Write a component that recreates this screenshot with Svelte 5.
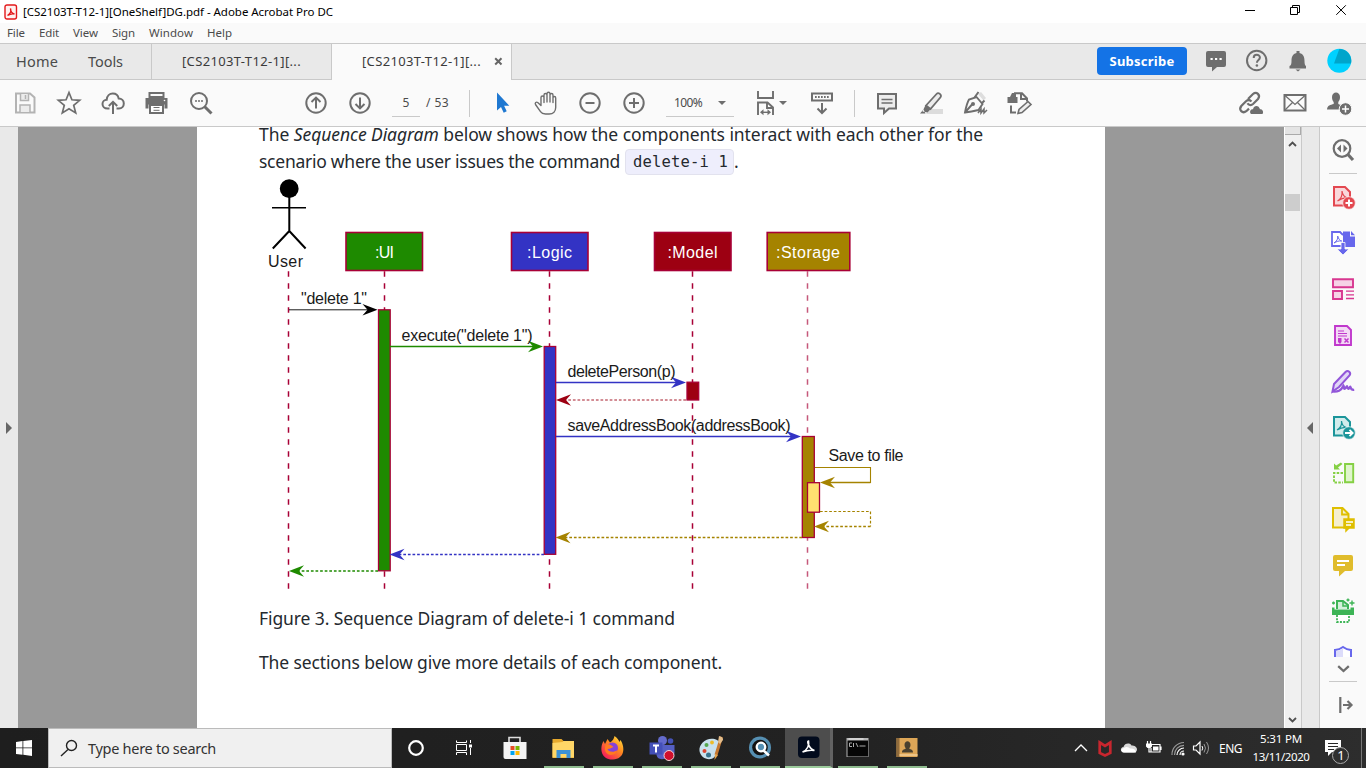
<script>
  // Spreads a line of text over a given width with letter spacing.
  function track(node, width) {
    const range = document.createRange();
    range.selectNodeContents(node);
    const natural = range.getBoundingClientRect().width;
    node.style.letterSpacing = (width - natural) / node.textContent.length + 'px';
  }

  const S = 'fill="none" stroke="currentColor" stroke-width="2"';
  const icons = {
    save: `<path d="M5 4.500h14l4.500 4v15h-18.500z" fill="none" stroke="#b3b3b3" stroke-width="2"/><path d="M9.500 5v6.500h8V5M9 23v-7h10v7" fill="#ececec" stroke="#b3b3b3" stroke-width="1.500"/><path d="M14.500 6v4" stroke="#b3b3b3" stroke-width="1.500"/>`,
    star: `<path d="M14 3.500l2.900 7.300 7.800.5-6 5 2 7.600-6.700-4.200-6.700 4.200 2-7.600-6-5 7.800-.5z" fill="none" stroke="currentColor" stroke-width="1.700"/>`,
    cloud: `<path d="M10.500 19.500H8.500c-3 0-5-2-5-4.500s2-4.300 4.200-4.300C8 7 10.500 4.600 13.800 4.600c3 0 5.300 2 5.900 5 3 0 5.100 2 5.100 4.800 0 2.900-2 5.100-4.800 5.100h-2.500" ${S}/><path d="M14 25V13M9.800 17L14 12.800l4.200 4.200" ${S}/>`,
    print: `<path d="M6.500 4h14v4h-14z" fill="none" stroke="currentColor" stroke-width="2"/><path d="M2.500 9h22v10.500h-3v-4h-16v4h-3z" fill="currentColor"/><path d="M7 16h13v8H7z" fill="#fff" stroke="currentColor" stroke-width="2"/><path d="M10.500 18.500h6M10.500 21.300h6" stroke="currentColor"/><circle cx="21.500" cy="11.500" r=".8" fill="#fff"/>`,
    find: `<circle cx="12" cy="12" r="8" ${S}/><path d="M17.500 17.500l7 7" stroke="currentColor" stroke-width="3"/><path d="M8 12h2M11 12h2M14 12h2" stroke="currentColor" stroke-width="1.700"/>`,
    up: `<circle cx="14" cy="14" r="9.700" ${S}/><path d="M14 19.500V9M9.500 13L14 8.600l4.500 4.400" ${S}/>`,
    down: `<circle cx="14" cy="14" r="9.700" ${S}/><path d="M14 8.500V19M9.500 15l4.500 4.400 4.500-4.400" ${S}/>`,
    cursor: `<path d="M9 3.500v18l4-3.500 2.700 5.800 3-1.500-2.600-5.600h5.200z" fill="#1f78d1"/>`,
    hand: `<path d="M9 16.500l-3.300-3c-1.400-1-3.100.4-2.200 2l5 7.200C9.800 24.700 11 25 13.500 25h3.700c4 0 6.500-2.700 6.500-6.500V9c0-2-2.700-2-2.700 0v4.500V6c0-2-3-2-3 0v7V4.800c0-2-3-2-3 0V13 6c0-2-3-2-3 0v7.500V8.500c0-2-3-2-3 0z" fill="none" stroke="currentColor" stroke-width="1.400" stroke-linejoin="round"/>`,
    minus: `<circle cx="14" cy="14" r="9.700" ${S}/><path d="M9.500 14h9" ${S}/>`,
    plus: `<circle cx="14" cy="14" r="9.700" ${S}/><path d="M9 14h10M14 9v10" ${S}/>`,
    fit: `<path d="M7 2v7h15V2M7 26V13.500h9.500l5.500 5V26M16 13.500v5.500h6" fill="none" stroke="currentColor" stroke-width="1.900"/><path d="M10.500 23.300h8" stroke="currentColor" stroke-width="1.400"/><path d="M12.500 20.300v6l-3.500-3zM16.500 20.300v6l3.500-3z" fill="currentColor"/>`,
    keys: `<path d="M4 4.500h20v7H4z" ${S}/><path d="M7 8h14" stroke="currentColor" stroke-width="1.800" stroke-dasharray="1.700 1.300"/><path d="M14 14v9.500M9.500 19.500l4.500 4.500 4.500-4.500" ${S}/>`,
    note: `<path d="M5 5h18v14.500h-7l-5 4.500v-4.500H5z" fill="#ececec" stroke="currentColor" stroke-width="2"/><path d="M8.500 10.500h11M8.500 14h11" stroke="currentColor" stroke-width="1.300"/>`,
    marker: `<path d="M13 20h13v5H9z" fill="#dcdcdc"/><path d="M9 16.500L19.500 5c2-2.200 5.600.8 4 3.300L13.500 20z" fill="#ececec" stroke="currentColor" stroke-width="1.800"/><path d="M8.500 16l5 4.300-3 3.300-5-1zM6.500 20.500L3 24.500h5.500z" fill="currentColor"/>`,
    nib: `<path d="M17 5l5.500 6.500 2.500-2.500-5-6z" fill="#ddd"/><path d="M4 23.500C5 18 6 14 8 10.500l7.500-2.500 6 7L17.500 21c-4 1-9 2-13.500 2.500zM4 23.500l7-8" fill="none" stroke="currentColor" stroke-width="1.900"/><path d="M13.500 8.500l4-5.500M20.500 14.500l3-3" stroke="currentColor" stroke-width="2"/><circle cx="12" cy="15" r="2" fill="currentColor"/><path d="M17 24l3-4v4l3-4v4l3-3" fill="none" stroke="currentColor" stroke-width="1.500"/>`,
    edit: `<path d="M9 4.200h8l5 5.300v3M16 4.500v5.500h6M6 16.500v7h5" ${S}/><path d="M2.500 8h10v6h-10z" fill="currentColor"/><path d="M5 8l2-4h4v4" fill="currentColor"/><path d="M13 24.500l1-4 9-8 3 3-9 8z" fill="#eee" stroke="currentColor" stroke-width="1.600"/>`,
    link: `<g fill="none" stroke="currentColor" stroke-width="2.200"><path d="M11 10l5-5c3.500-3 8 1 5 5l-5 5c-2 1.800-4.500 1-5.500-.7"/><path d="M14.500 12.500c-2-2-4-1.700-5.500-.3l-4.700 4.800c-3 4 1.200 8 5 5.200l2.700-2.600"/></g><path d="M14 25c-2-2-.5-5 2-4.700 1-4.600 6-4.200 7 0 2.500-.3 4 2.700 2.500 4.700z" fill="currentColor"/>`,
    mail: `<path d="M3.500 6h21v15.500h-21z" ${S}/><path d="M4 6.500l10 9 10-9M4 21l7.500-7.500M24 21l-7.500-7.500" fill="none" stroke="currentColor" stroke-width="1.300"/>`,
    person: `<path d="M7 8c0-6 8-6 8 0 0 2.500-.8 3.800-1.700 5v2c3 1.500 5.200 2 5.700 5.500H2c.4-4.500 3.500-4.500 6.700-5.500v-2C7.800 12 7 10.500 7 8z" fill="currentColor"/><circle cx="20.500" cy="20" r="6.300" fill="currentColor" stroke="#fafafa"/><path d="M17 20h7M20.500 16.500v7" stroke="#fff" stroke-width="1.500"/>`,
    chat: `<path d="M6 4h16q2 0 2 2v12q0 2-2 2h-7l-5 4.500V20H6q-2 0-2-2V6q0-2 2-2z" fill="currentColor"/><path d="M8.500 12h2.200M13 12h2.200M17.500 12h2.200" stroke="#fff" stroke-width="2"/>`,
    help: `<circle cx="13.700" cy="13.500" r="9.700" ${S}/><path d="M10.700 11c0-4.200 6.200-4 6.200-.5 0 2.500-3 2.400-3 5.200" ${S}/><circle cx="13.900" cy="18.500" r="1.300" fill="currentColor"/>`,
    bell: `<path d="M12.500 4h3v2c4 1 5 4 5 8 0 3 .5 4.500 1.500 5v2.500H5.500V19C7 18.500 7.500 17 7.500 14c0-4 1-7 5-8zM11.500 22.500h5l-2.500 2z" fill="currentColor"/>`,
    avatar: `<circle cx="14.300" cy="13.700" r="12" fill="#00d1ff"/><path d="M14.300 1.900A12 12 0 0 1 26 16.500H9z" fill="#00a5cb"/>`
  };

  const side = [
    `<path d="M5 4h11l5 5v13.500H5z" fill="#f9d7da" stroke="#e34850" stroke-width="2"/><path d="M8.500 18c3.500-2 5-6 4.500-10 .5 4 2 6 5.500 7-3-.5-6 .5-10 3z" fill="none" stroke="#e34850" stroke-width="1.200"/><circle cx="20" cy="20" r="6.300" fill="#e34850" stroke="#fafafa" stroke-width=".7"/><path d="M16.500 20h7M20 16.500v7" stroke="#fff" stroke-width="2"/>`,
    `<path d="M12 17H3V3h8l3 3" fill="#fff" stroke="#6767ec" stroke-width="1.800"/><path d="M14 2.500h7v5h5V18H14zM22 2l4 4.200h-4z" fill="#6767ec"/><path d="M5 14c3-2 4-4 3.700-7 .8 3 2 4.500 4 5-3-.4-5 .5-7.700 2z" fill="none" stroke="#6767ec"/><path d="M12 13.500h4V20h4l-6 6-6-6h4z" fill="#6767ec" stroke="#fafafa" stroke-width=".8"/>`,
    `<path d="M4 4.200h20v8H4zM4 16h9v8H4z" fill="#f6d2e6" stroke="#d83790" stroke-width="1.900"/><path d="M17 16.200h8M17 19.800h8M17 23.500h8" stroke="#d83790" stroke-width="1.300"/>`,
    `<path d="M6 5h12l4 4v15H6z" fill="#f3d9f5" stroke="#c038cc" stroke-width="1.900"/><path d="M9 10h6M9 12.500h9M9 15h9" stroke="#c038cc" stroke-width="1.200"/><path d="M9 17h3.500v4L11 23l-2-2z" fill="#c038cc"/><path d="M15.500 17.500l4 4M19.500 17.500l-4 4" stroke="#c038cc" stroke-width="1.500"/>`,
    `<path d="M5 17L16.500 5c2.500-2.500 6 .5 4 3.500L10 20l-6.500 4.500z" fill="#e1d6f7" stroke="#9256d9" stroke-width="2"/><path d="M3 24.500c6 .5 9-.500 11.500-6 1 1 0 3.500 1 3.500s2-3 2.500-3 .2 3 1.200 3 1.500-2.500 2-2.500 0 3.800 4 3.300" fill="none" stroke="#9256d9" stroke-width="2.200"/>`,
    `<path d="M5 4h11l5 5v13.500H5z" fill="#d2ecec" stroke="#1b959a" stroke-width="2"/><path d="M8 17c3.500-2 5-5 4.500-9 .5 4 2 6 5 6.500-3-.5-6 .5-9.500 2.500z" fill="none" stroke="#1b959a" stroke-width="1.200"/><circle cx="20" cy="20" r="6.300" fill="#1b959a" stroke="#fafafa" stroke-width=".7"/><path d="M16 20h7M20.500 16.800l3.200 3.200-3.200 3.200" fill="none" stroke="#fff" stroke-width="1.800"/>`,
    `<path d="M16 5h8.200v18.300H16z" fill="#dff5cc" stroke="#85d044" stroke-width="1.900"/><path d="M14 14H5v9.500h9" fill="none" stroke="#85d044" stroke-width="1.900" stroke-dasharray="2.500 1.300"/><path d="M5 4.500v6h6l-2-2L13.500 5l-1.600-1.500-4.700 3z" fill="#85d044"/>`,
    `<path d="M4 3h9.500l6 6v13.500H4z" fill="#f5efcd" stroke="#dfbf00" stroke-width="2"/><path d="M13 3v6.500h7" fill="none" stroke="#dfbf00" stroke-width="1.800"/><path d="M15 14h10v9h-5l-3 3v-3h-2z" fill="#dfbf00" stroke="#dfbf00" stroke-width="1.500"/><path d="M17 17h7M17 20h5" stroke="#fff" stroke-width="1.300"/>`,
    `<path d="M6 4h16q2 0 2 2v12q0 2-2 2h-6l-6 5.500V20H6q-2 0-2-2V6q0-2 2-2z" fill="#e0bc2c"/><path d="M8 10h12M8 14h8" stroke="#fff" stroke-width="1.800"/>`,
    `<path d="M8 12V4h6l5 4v4" fill="#d4f0db" stroke="#3db456" stroke-width="2"/><path d="M14 4v5h6" fill="none" stroke="#3db456" stroke-width="1.500"/><path d="M3 10.500h2.500v2h16v-2H25v7.500H3z" fill="#3db456"/><path d="M8 18v7h12v-7" fill="#fff" stroke="#3db456" stroke-width="1.800" stroke-dasharray="2 1.300"/><path d="M4.500 4.500v3M3 6h3M23 3.500v5M20.500 6h5M19 1.500v3M17.500 3h3" stroke="#3db456" stroke-width="1.400"/>`,
    `<path d="M6 14V7c3.200-.3 5.600-1.200 8-3 2.400 1.800 4.800 2.700 8 3v10" fill="#fff" stroke="#6767ec" stroke-width="2"/><path d="M7 8c2.800-.3 5-1.200 7-2.800V18H7z" fill="#dcdcfa"/>`
  ];

  const apps = [
    { cls: 'store', run: false, art: `<path d="M8.500 9V3.500h11V9" fill="none" stroke="#ddd" stroke-width="1.600"/><path d="M3 8h23v17H5q-2 0-2-2z" fill="#f4f4f4"/><path d="M10 12h4v4h-4z" fill="#e74c25"/><path d="M15 12h4v4h-4z" fill="#7bb700"/><path d="M10 17h4v4h-4z" fill="#00a3ee"/><path d="M15 17h4v4h-4z" fill="#ffb900"/>` },
    { cls: 'explorer', run: true, art: `<path d="M3 5h9l2 2h10.500v17H3z" fill="#e7a92d"/><path d="M3 9l10-1 1-1h10.500v16.500H3z" fill="#ffd667"/><path d="M7 24v-8h14v8h-4v-4h-6v4z" fill="#3b91d6"/>` },
    { cls: 'firefox', run: true, art: `<defs><linearGradient id="fx" x1="1" y1="0" x2=".2" y2="1"><stop offset="0" stop-color="#fff044"/><stop offset=".45" stop-color="#ff8c1f"/><stop offset="1" stop-color="#f5155f"/></linearGradient></defs><path d="M16 2c3 2 4 4 5 6l1-2c5 8 4 19-7.500 19.500C3 26 .5 15 5 7l1.500 3L9 5l2.500 3.500C14 7 15.500 5 16 2z" fill="url(#fx)"/><circle cx="14" cy="14" r="5.500" fill="#8541d8"/><path d="M7 11c3-2 6 0 8 2-2 .5-3 2-6 2 1 3 6 4 10 1-1 5-8 6.500-11 3-2-2-2-5-1-8z" fill="#ff7a21"/>` },
    { cls: 'teams', run: true, art: `<circle cx="15" cy="6.500" r="4.500" fill="#646bcc"/><circle cx="23" cy="7" r="2.800" fill="#4552b5"/><path d="M9 11h11v11c-3 5-11 4-11-2zM20 11h7v8c-1 4-5 4-7 2z" fill="#555fc3"/><path d="M2 8.500h13v12H2z" fill="#4450b8"/><path d="M5.500 11.500h6M8.500 11.500v7" stroke="#fff" stroke-width="2"/><circle cx="21.500" cy="21.500" r="5" fill="#d0102c" stroke="#f4d5da"/>` },
    { cls: 'paint', run: true, art: `<path d="M3 17C2 10 10 3 18 5c6 1 7 8 3 10-3 1 0 4-3 8-5 5-14 1-15-6z" fill="#c9e1ed"/><circle cx="8" cy="17" r="2" fill="#de4530"/><circle cx="10" cy="11" r="2" fill="#54a84f"/><circle cx="15.500" cy="8.500" r="1.900" fill="#edbb29"/><circle cx="12" cy="21" r="2.500" fill="#38738d"/><path d="M25 3l-5.500 18" stroke="#c67831" stroke-width="3"/><path d="M21.500 8l1-6c2 .500 4 1 4 4l-3 4z" fill="#e3bd8b"/><path d="M18 26l.500-6 3 1z" fill="#e5a34a"/>` },
    { cls: 'search', run: true, art: `<circle cx="14.500" cy="13.500" r="11" fill="#5690b3"/><circle cx="14.500" cy="13.500" r="7.800" fill="#111"/><circle cx="15.500" cy="13" r="4.300" fill="#5690b3" stroke="#fff" stroke-width="2.300"/><path d="M18 16.500l5.500 5" stroke="#fff" stroke-width="2.500"/>` },
    { cls: 'acrobat', run: true, art: `<rect x="4.500" y="2.500" width="21.500" height="21.500" rx="4" fill="#020b1d"/><path d="M9 18c5-2 7-7 6-11-2 0 .5 8 6 9.500-4-.8-8 0-12 1.500z" fill="none" stroke="#fff" stroke-width="1.600"/>` },
    { cls: 'console', run: true, art: `<path d="M3 4h22v19H3z" fill="#b4b4b4"/><path d="M4 6.500h20.500v16H4z" fill="#060606"/><path d="M5 5h15" stroke="#eee"/><path d="M8.500 9H6v3.500h2.500M10 9v4M12.500 9l2 4M16 12h6" fill="none" stroke="#aaa"/>` },
    { cls: 'contacts', run: true, art: `<path d="M4 4h21v19H4z" fill="#dda657"/><path d="M4 4h3v19H4z" fill="#8f6b3c"/><path d="M7 20h18v2H7z" fill="#edc486"/><path d="M12 11c0-5 6-5 6 0 0 2-1 3-1.500 3.500 2 1 4 1 4 4h-11c0-3 2-3 4-4-.5-.5-1.500-1.500-1.500-3.500z" fill="#49402f"/>` }
  ];

  const lifelines = [288.5, 384.5, 549.5, 692.5];
  const boxes = [
    { x: 346, w: 76.500, fill: '#1e8a00', name: ':UI', tx: 375, tw: 19 },
    { x: 511.500, w: 76.500, fill: '#3333c4', name: ':Logic', tx: 527, tw: 45 },
    { x: 654.500, w: 76.500, fill: '#9d0012', name: ':Model', tx: 667.500, tw: 50 },
    { x: 767.200, w: 82.600, fill: '#a58300', name: ':Storage', tx: 776, tw: 64 }
  ];
  const bars = [
    { x: 378.500, y: 309.800, w: 11.700, h: 261, fill: '#1e8a00' },
    { x: 544.200, y: 346.500, w: 11.500, h: 207.800, fill: '#3333c4' },
    { x: 687, y: 382.200, w: 11.700, h: 17.800, fill: '#9d0012' },
    { x: 802.300, y: 436.500, w: 12, h: 101, fill: '#a58300' },
    { x: 807.500, y: 482.700, w: 12, h: 29.500, fill: '#ffe070' }
  ];
  const arrows = [
    { from: 289, to: 377.500, y: 309.800, color: '#000', thin: true },
    { from: 390, to: 543, y: 346.500, color: '#1e8a00' },
    { from: 556, to: 686, y: 382.500, color: '#3333c4' },
    { from: 686, to: 556, y: 400, color: '#9d0012', dash: true, thin: true },
    { from: 556, to: 801, y: 436.500, color: '#3333c4' },
    { from: 870.500, to: 820, y: 482.500, color: '#a58300' },
    { from: 870.500, to: 814, y: 526.500, color: '#a58300', dash: true },
    { from: 802, to: 555.500, y: 537.500, color: '#a58300', dash: true },
    { from: 544, to: 389.500, y: 554.500, color: '#3333c4', dash: true },
    { from: 378, to: 289, y: 571, color: '#1e8a00', dash: true }
  ];
  const labels = [
    { x: 268, y: 267.400, w: 35, t: 'User' },
    { x: 301, y: 304.400, w: 66, t: '"delete 1"' },
    { x: 401.500, y: 341, w: 131, t: 'execute("delete 1")' },
    { x: 567.500, y: 377, w: 108, t: 'deletePerson(p)' },
    { x: 567.500, y: 431, w: 223, t: 'saveAddressBook(addressBook)' },
    { x: 828.500, y: 461, w: 75, t: 'Save to file' }
  ];
  const head = (a) => {
    const d = a.to > a.from ? -1 : 1;
    return `${a.to},${a.y} ${a.to + 15 * d},${a.y - 5.800} ${a.to + 10 * d},${a.y} ${a.to + 15 * d},${a.y + 5.800}`;
  };
  const menu = [['File', 18], ['Edit', 20], ['View', 25], ['Sign', 23], ['Window', 44], ['Help', 25]];
</script>

{#snippet icon(name)}
  <span class="ic"><svg width="28" height="28" viewBox="0 0 28 28">{@html icons[name]}</svg></span>
{/snippet}

<div class="window">
  <header class="title">
    <svg width="14" height="16" viewBox="0 0 14 16"><rect x="1" y="1" width="11.500" height="14" rx="2" fill="#fff1f0" stroke="#e3191b" stroke-width="1.400"/><path d="M3.500 11.500C6 10 7.500 7 6.500 4.500c0 3 2 5 4 5.500-2-.4-4.500 0-7 1.500z" fill="none" stroke="#e3191b" stroke-width="1.400"/></svg>
    <span class="name" use:track={310}>[CS2103T-T12-1][OneShelf]DG.pdf - Adobe Acrobat Pro DC</span>
    <svg class="winctl" width="110" height="20" viewBox="1244 0 110 20" fill="none" stroke="#000"><path d="M1245 10.500h10M1290.500 7.500h7v7h-7zM1292.500 7.500v-2h7v7h-2M1336.300 5.300l9.500 9.500M1345.800 5.300l-9.500 9.500"/></svg>
  </header>
  <nav class="menu">
    {#each menu as [m, w]}<span class="mi" use:track={w}>{m}</span>{/each}
  </nav>

  <div class="tabs">
    <div class="home"><span use:track={42}>Home</span><span use:track={35}>Tools</span></div>
    <div class="tab"><span use:track={119}>[CS2103T-T12-1][...</span></div>
    <div class="tab on"><span use:track={119}>[CS2103T-T12-1][...</span><svg width="9" height="9" viewBox="0 0 9 9"><path d="M1.200 1.200l6.300 6.300M7.500 1.200L1.200 7.500" stroke="#666" stroke-width="2"/></svg></div>
    <div class="account">
      <button><span use:track={65}>Subscribe</span></button>
      {@render icon('chat')}{@render icon('help')}{@render icon('bell')}{@render icon('avatar')}
    </div>
  </div>

  <div class="tools">
    <div class="g">{#each ['save', 'star', 'cloud', 'print', 'find'] as n}{@render icon(n)}{/each}</div>
    <div class="g nav">{@render icon('up')}{@render icon('down')}</div>
    <span class="page">5</span><span class="total" use:track={23}>/ 53</span>
    <i class="sep"></i>
    <div class="g view">{#each ['cursor', 'hand', 'minus', 'plus'] as n}{@render icon(n)}{/each}</div>
    <span class="zoom"><span use:track={28}>100%</span><i class="caret"></i></span>
    <div class="g fit">{@render icon('fit')}<i class="caret"></i></div>
    <div class="g keys">{@render icon('keys')}</div>
    <i class="sep second"></i>
    <div class="g notes">{#each ['note', 'marker', 'nib', 'edit'] as n}{@render icon(n)}{/each}</div>
    <div class="g share">{#each ['link', 'mail', 'person'] as n}{@render icon(n)}{/each}</div>
  </div>

  <main>
    <aside class="left"><svg width="6" height="12" viewBox="0 0 6 12"><path d="M0 0l6 6-6 6z" fill="#666"/></svg></aside>
    <div class="desk">
      <article>
        <p class="intro"><span use:track={724}>The <em>Sequence Diagram</em> below shows how the components interact with each other for the</span></p>
        <p class="two"><span use:track={361}>scenario where the user issues the command</span><code><span use:track={95}>delete-i 1</span></code>.</p>
        <svg class="diagram" width="660" height="416" viewBox="259 176 660 416">
          <g stroke="#a80036" stroke-width="1.500" stroke-dasharray="5.500 6.500">
            {#each lifelines as x}<path d="M{x} 271.300V589" />{/each}
            <path d="M807.500 271.300V589" opacity=".65" />
          </g>
          <circle cx="289.200" cy="188.700" r="9.400" />
          <path d="M289.300 197v34M289.300 231l-16.500 17.500M289.300 231l16.300 17.500" stroke="#000" stroke-width="2" />
          <path d="M272 207.800h34" stroke="#000" stroke-width="1.600" />
          {#each boxes as b}
            <rect x={b.x} y="232.500" width={b.w} height="38" fill={b.fill} stroke="#a80036" stroke-width="1.600" />
            <text x={b.tx} y="258.400" textLength={b.tw} fill="#fff">{b.name}</text>
          {/each}
          {#each bars as b}<rect x={b.x} y={b.y} width={b.w} height={b.h} fill={b.fill} stroke="#a80036" stroke-width="1.300" />{/each}
          {#each arrows as a}
            <path d="M{a.from} {a.y}H{a.to + (a.to > a.from ? -6 : 6)}" stroke={a.color} stroke-width={a.thin ? 0.9 : 1.4} stroke-dasharray={a.dash ? '2.700 1.900' : null} />
            <polygon points={head(a)} fill={a.color} />
          {/each}
          <path d="M815 467.500h55.500v15.500" fill="none" stroke="#a58300" stroke-width="1.100" />
          <path d="M820 511.500h50.500v15" fill="none" stroke="#a58300" stroke-width="1.200" stroke-dasharray="2.700 1.900" />
          {#each labels as l}<text x={l.x} y={l.y} textLength={l.w} fill="#1a1a1a">{l.t}</text>{/each}
        </svg>
        <p class="cap"><span use:track={416}>Figure 3. Sequence Diagram of delete-i 1 command</span></p>
        <p class="end"><span use:track={463}>The sections below give more details of each component.</span></p>
      </article>
    </div>
    <div class="scroll">
      <i class="split"></i>
      <svg width="9" height="6" viewBox="0 0 9 6"><path d="M1 5l3.500-3.500L8 5" fill="none" stroke="#505050" stroke-width="1.800"/></svg>
      <i class="thumb"></i>
      <svg class="dn" width="9" height="6" viewBox="0 0 9 6"><path d="M1 1l3.500 3.500L8 1" fill="none" stroke="#505050" stroke-width="1.800"/></svg>
    </div>
    <div class="fold"><svg width="6" height="12" viewBox="0 0 6 12"><path d="M6 0L0 6l6 6z" fill="#666"/></svg></div>
    <aside class="panel">
      <div class="cell top"><svg width="28" height="28" viewBox="0 0 28 28"><circle cx="13" cy="12.500" r="8.300" fill="none" stroke="#6e6e6e" stroke-width="2.200"/><path d="M18.500 18l5.500 6" stroke="#6e6e6e" stroke-width="3.200"/><path d="M12 8.500v8l-4-4zM14.500 8.500v8l4-4z" fill="#6e6e6e"/></svg></div>
      <hr />
      <div class="list">
        {#each side as art}<div class="cell"><svg width="28" height="28" viewBox="0 0 28 28">{@html art}</svg></div>{/each}
      </div>
      <div class="more"><svg width="13" height="8" viewBox="0 0 13 8"><path d="M1.200 1.200L6.500 6l5.300-4.800" fill="none" stroke="#6e6e6e" stroke-width="2.300"/></svg></div>
      <hr />
      <div class="cell"><svg width="28" height="28" viewBox="0 0 28 28"><path d="M11.300 6v16M14 14h9M18.500 10l4 4-4 4" fill="none" stroke="#6e6e6e" stroke-width="2.200"/></svg></div>
    </aside>
  </main>

  <footer>
    <div class="start"><svg width="16" height="16" viewBox="0 0 16 16" fill="#fff"><path d="M0 2l6.500-.9v6.400H0zM7.300 1L16 0v7.500H7.300zM0 8.300h6.500v6.500L0 14zM7.300 8.300H16V16l-8.700-1.200z"/></svg></div>
    <div class="find">
      <svg width="18" height="18" viewBox="0 0 18 18"><circle cx="11.500" cy="6.500" r="5" fill="none" stroke="#222" stroke-width="1.400"/><path d="M8 10.500l-7 6.500" stroke="#222" stroke-width="1.400"/></svg>
      <span use:track={128}>Type here to search</span>
    </div>
    <div class="sys"><svg width="18" height="18" viewBox="0 0 18 18"><circle cx="9" cy="9" r="6.800" fill="none" stroke="#fff" stroke-width="2.200"/></svg></div>
    <div class="sys"><svg width="18" height="18" viewBox="0 0 18 18" fill="none" stroke="#fff"><path d="M1.500 1.500v2h10v-2M1.500 5.500h10v6h-10zM1.500 16v-2.500h10V16M15.500 1v3M15.500 9v7"/><path d="M14 5.500h3v3h-3z" fill="#fff" stroke="none"/></svg></div>
    <div class="apps">
      {#each apps as a}<div class="app {a.cls}" class:run={a.run}><svg width="28" height="28" viewBox="0.5 0 28 28">{@html a.art}</svg></div>{/each}
    </div>
    <div class="tray">
      <svg width="140" height="24" viewBox="1072 736 140 24">
        <path d="M1075 751l6-6 6 6" fill="none" stroke="#fff" stroke-width="1.300" />
        <path d="M1099.700 742.500l5.300 3.500 5.300-3.500v10.500l-5.300 2.500-5.300-2.500z" fill="none" stroke="#c8262e" stroke-width="2.700" />
        <path d="M1124 752.500c-4-.5-4-5-.5-5.500 1-4 6.500-4.500 8-1.500 3 0 5.500 1.500 5.500 4 0 2-1.500 3-3 3z" fill="#d8d8d8" />
        <path d="M1124 752.500c-4-.500-3-4.500 0-4.500 2-2 5-1 6 .500 3-.500 6 1 6 4z" fill="#fff" />
        <path d="M1151.500 744.500h8.500v7.500h-9v-4M1161 746.500v3.500M1147.500 741v3M1150.500 741v3M1149 747v5h3" fill="none" stroke="#fff" stroke-width="1.200" />
        <path d="M1146 743.500h6v3l-1.500 1.500h-3l-1.500-1.500zM1153 746.500h5.500v4H1153z" fill="#fff" />
        <g fill="none" stroke="#fff" stroke-width="1.200"><path d="M1180 755a4 4 0 0 1 4-4M1177 755a7 7 0 0 1 7-7" /><path d="M1174.500 755a9.500 9.500 0 0 1 9.500-9.700M1172 755a12 12 0 0 1 12-12.500" stroke="#999" /></g>
        <circle cx="1183" cy="754" r="1.600" fill="#fff" />
        <path d="M1193.500 746h2.500l4-4v12l-4-4h-2.500z" fill="none" stroke="#fff" stroke-width="1.200" />
        <path d="M1202 746q1.500 2 0 4.500" fill="none" stroke="#fff" /><path d="M1204 744q3 4 0 8.500M1206.500 742q4 6 0 12" fill="none" stroke="#999" />
      </svg>
      <span class="lang" use:track={23}>ENG</span>
      <div class="clock"><span use:track={42}>5:31 PM</span><span use:track={57}>13/11/2020</span></div>
      <svg class="msg" width="28" height="26" viewBox="1324 738 28 26"><path d="M1325 740h16v12h-9l-4 4v-4h-3z" fill="#fff"/><path d="M1328 743.500h10M1328 746.500h10M1328 749.500h6" stroke="#282828"/><circle cx="1340.500" cy="755.500" r="8" fill="#303030" stroke="#aaa"/><text x="1337.300" y="760" fill="#fff">1</text></svg>
      <i class="peek"></i>
    </div>
  </footer>
</div>

<style>
  :global(body) { margin: 0; overflow: hidden; }
  .window { width: 1366px; height: 768px; display: flex; flex-direction: column; font-family: "Noto Sans", "Open Sans", sans-serif; font-size: 12px; color: #4b4b4b; background: #fafafa; overflow: hidden; white-space: nowrap; }
  .window :global(*) { box-sizing: border-box; }
  svg { display: block; flex: none; }
  .title { height: 23px; display: flex; align-items: center; background: #fff; padding: 0 12px 0 4px; color: #000; font-size: 11.5px; }
  .name { margin-left: 5px; }
  .winctl { margin-left: auto; align-self: flex-start; }
  .menu { height: 20px; display: flex; align-items: center; gap: 14px; padding: 0 0 2px 7px; font-size: 11.5px; }
  .tabs { height: 37px; flex: none; display: flex; background: #e9e9e9; border-top: 1px solid #c9c9c9; border-bottom: 1px solid #c9c9c9; font-size: 13px; }
  .home { width: 152px; display: flex; align-items: center; gap: 30px; padding: 0 0 2px 16px; border-right: 1px solid #c9c9c9; font-size: 14.5px; }
  .tab { width: 180px; display: flex; align-items: center; padding: 0 0 1px 30px; border-right: 1px solid #c9c9c9; color: #3b3b3b; }
  .tab.on { background: #fafafa; margin-bottom: -1px; padding-bottom: 2px; }
  .tab svg { margin-left: 13px; }
  .account { margin-left: auto; display: flex; align-items: center; padding: 0 7px 1px 0; }
  .account .ic { width: 41px; }
  .account button { width: 90px; height: 28px; margin-right: 8px; padding: 0; border: 0; border-radius: 4px; background: #1473e6; color: #fff; font: bold 13px "Noto Sans", sans-serif; }
  .ic { width: 44px; display: flex; justify-content: center; color: #6e6e6e; flex: none; }
  .tools { height: 47px; flex: none; display: flex; align-items: center; padding-left: 3px; border-bottom: 1px solid #c9c9c9; }
  .g { display: flex; align-items: center; }
  .nav { margin-left: 71px; }
  .page { width: 28px; height: 27px; margin-left: 10px; line-height: 25px; text-align: center; border-bottom: 1px solid #c9c9c9; }
  .total { margin-left: 6px; width: 23px; padding-bottom: 1px; }
  .page, .total { font-size: 12px; }
  .sep { width: 1px; height: 27px; margin-left: 20px; background: #c9c9c9; }
  .view { margin-left: 10px; }
  .zoom { width: 68px; height: 27px; margin-left: 10px; padding: 0 8px; display: flex; align-items: center; justify-content: space-between; border-bottom: 1px solid #c9c9c9; }
  .caret { border: 4px solid transparent; border-top-color: #6e6e6e; border-bottom: 0; }
  .fit { margin-left: 9px; }
  .fit .caret { margin-left: -8px; }
  .keys { margin-left: 13px; }
  .second { margin-left: 10px; }
  .notes { margin-left: 10px; }
  .share { margin-left: auto; padding-right: 5px; }
  main { height: 601px; display: flex; background: #fff; }
  .left { width: 18px; display: flex; align-items: center; padding-left: 6px; background: #e9e9e9; }
  .desk { width: 1267px; background: #999; padding-left: 179px; overflow: hidden; border-right: 1px solid #fff; }
  article { width: 908px; height: 601px; background: #fff; padding-left: 62px; color: #24292e; font-size: 17.500px; overflow: hidden; }
  p { margin: 0; height: 27px; line-height: 27px; }
  .intro { height: 21px; line-height: 14px; }
  .two { display: flex; align-items: center; }
  .two > span { width: 361px; }
  code { width: 109px; height: 26px; margin: 1px 0 0 5px; padding-left: 7px; border: 1px solid #e2e2ee; border-radius: 4px; background: #eeeefc; font: 15.500px/25px "DejaVu Sans Mono", monospace; }
  .diagram { margin-top: 1px; font: 16px "Liberation Sans", Arial, sans-serif; }
  .cap { margin-top: 13px; }
  .end { margin-top: 17px; }
  .scroll { width: 16px; display: flex; flex-direction: column; align-items: center; padding-right: 1px; background: #f0f0f0; }
  .split { width: 16px; height: 8px; background: #e4e4e4; border-right: 1px solid #aaa; border-bottom: 1px solid #aaa; margin-bottom: 6px; }
  .thumb { width: 15px; height: 17px; margin-top: 47px; background: #cdcdcd; }
  .dn { margin: auto 0 5px; }
  .fold { width: 19px; display: flex; align-items: center; padding-left: 5px; border: solid #c9c9c9; border-width: 0 1px; background: #e9e9e9; }
  .panel { width: 46px; background: #fafafa; }
  .cell { height: 46px; display: flex; align-items: center; justify-content: center; }
  hr { width: 28px; height: 1px; margin: 0 auto; border: 0; background: #c9c9c9; }
  .list { height: 483px; overflow: hidden; }
  .more { height: 24px; display: flex; justify-content: center; padding-top: 8px; }
  footer { height: 40px; flex: none; display: flex; background: linear-gradient(90deg, #1e1e1e, #222 60%, #2d2d2d); color: #fff; }
  .start { width: 48px; display: grid; place-items: center; }
  .find { width: 344px; display: flex; align-items: center; gap: 10px; padding-left: 11px; background: #f0f0f0; border: 1px solid #bbb; color: #333; font-size: 14.5px; }
  .sys { width: 48px; display: grid; place-items: center; }
  .apps { display: flex; gap: 9px; margin-left: 7px; }
  .app { width: 40px; display: flex; justify-content: center; align-items: center; }
  .run { border-bottom: 2px solid #8fbc8f; padding-top: 2px; }
  .acrobat { width: 48px; margin: 0 -4px; background: #4d4d4d; border-bottom-color: #9bcb9b; border-right: 3px solid #626262; }
  .tray { margin-left: auto; display: flex; align-items: center; }
  .lang { width: 23px; margin-left: 7px; }
  .clock { width: 58px; margin-left: 10px; display: flex; flex-direction: column; align-items: center; line-height: 18px; font-size: 11.500px; }
  .msg { margin: 5px 0 0 14px; font: 13px "Noto Sans", sans-serif; }
  .peek { width: 1px; height: 40px; margin: 0 4px 0 9px; background: #777; }
</style>
